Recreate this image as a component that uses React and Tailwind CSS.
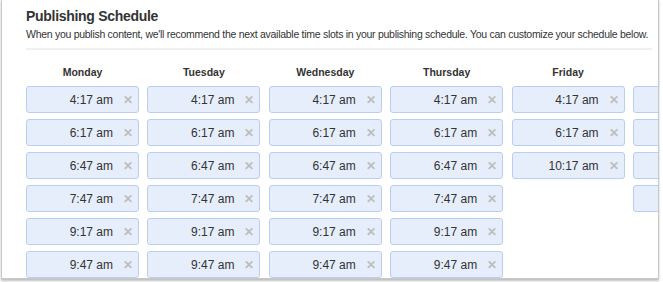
import React from 'react'

const days = [
    { name: 'Monday', slots: ['4:17 am', '6:17 am', '6:47 am', '7:47 am', '9:17 am', '9:47 am'] },
    { name: 'Tuesday', slots: ['4:17 am', '6:17 am', '6:47 am', '7:47 am', '9:17 am', '9:47 am'] },
    { name: 'Wednesday', slots: ['4:17 am', '6:17 am', '6:47 am', '7:47 am', '9:17 am', '9:47 am'] },
    { name: 'Thursday', slots: ['4:17 am', '6:17 am', '6:47 am', '7:47 am', '9:17 am', '9:47 am'] },
    { name: 'Friday', slots: ['4:17 am', '6:17 am', '10:17 am'] },
    // saturday is cut off by the card edge, only the tile edges show
    { name: '', slots: ['', '', '', ''] },
]

const Slot = ({ time }) => (
    <div className="h-[27px] flex items-center justify-end rounded-[3px] border border-[#b9cef0] bg-[#e6eefb] pr-[4px]">
        {time && (
            <>
                <span className="text-[12px] text-[#333]">{time}</span>
                <span className="ml-[9px] w-[12px] text-center text-[12px] font-bold leading-none text-[#bdbdbd]">✕</span>
            </>
        )}
    </div>
)

const App = () => {
    return (
        <div
            className="w-[663px] h-[282px] bg-white overflow-hidden"
            style={{ fontFamily: '"Liberation Sans", Arial, sans-serif' }}
        >
            <div className="ml-[1px] mt-[-1px] w-[658px] h-[280px] border border-[#c8c8c8] bg-white shadow-[0_2px_2px_rgba(0,0,0,0.25)] overflow-hidden">
                <div className="pl-[24px] pr-[4px]">
                    <h1 className="pt-[8px] text-[14px] leading-[16px] font-bold tracking-[-0.3px] text-[#333]">Publishing Schedule</h1>
                    <p className="mt-[4px] text-[10.5px] leading-[13px] tracking-[-0.28px] text-[#333] whitespace-nowrap">
                        When you publish content, we'll recommend the next available time slots in your publishing schedule. You can customize your schedule below.
                    </p>
                    <div className="mt-[7px] mr-[2px] h-[2px] bg-[#f0f0f0]" />

                    <div className="mt-[16px] flex gap-[8.4px]">
                        {days.map((day, d) => (
                            <div key={d} className="w-[113px] shrink-0">
                                <h2 className="h-[13px] text-center text-[10.5px] leading-[13px] font-bold text-[#333]">{day.name}</h2>
                                <div className="mt-[7px] flex flex-col gap-[6px]">
                                    {day.slots.map((time, i) => (
                                        <Slot key={i} time={time} />
                                    ))}
                                </div>
                            </div>
                        ))}
                    </div>
                </div>
            </div>
        </div>
    )
}

export default App
